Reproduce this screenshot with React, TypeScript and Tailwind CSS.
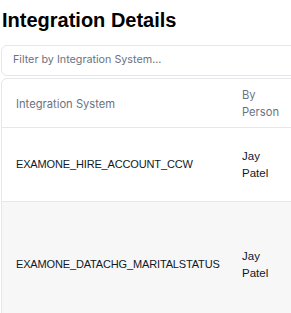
import React from 'react';

type Row = { system: string; person: string; h: string; striped: boolean };

const ROWS: Row[] = [
  { system: 'EXAMONE_HIRE_ACCOUNT_CCW', person: 'Jay Patel', h: 'h-[74px]', striped: false },
  { system: 'EXAMONE_DATACHG_MARITALSTATUS', person: 'Jay Patel', h: 'h-[126px]', striped: true },
];

const INTER = { fontFamily: 'Inter, sans-serif' };
const ARIAL = { fontFamily: '"Liberation Sans", Arial, sans-serif' };

export default function App() {
  return (
    <div className="w-[291px] h-[313px] overflow-hidden bg-white">
      <h1 className="pl-[2px] pt-[7px] text-[20px] leading-[26px] font-bold text-black" style={ARIAL}>
        Integration Details
      </h1>

      {/* Filtro */}
      <div className="mt-[12px] ml-px w-[320px] h-[31px] rounded-md border border-gray-200 flex items-center px-[11px]">
        <span className="text-[10.75px] text-gray-500" style={INTER}>
          Filter by Integration System...
        </span>
      </div>

      {/* Tabla */}
      <div className="mt-[2px] ml-px w-[400px] rounded-tl-md border border-gray-200">
        <div className="flex h-[49px] pt-[2px] border-b border-gray-200 items-center" style={INTER}>
          <div className="w-[227px] pl-[14px] text-[11.2px] text-gray-500">Integration System</div>
          <div className="w-[56px] pl-[13px] text-[11.2px] leading-[17px] text-gray-500">By Person</div>
        </div>
        {ROWS.map(r => (
          <div
            key={r.system}
            className={`flex items-center border-b border-gray-200 ${r.h} ${r.striped ? 'bg-[#f7f7f7]' : 'bg-white'}`}
            style={ARIAL}
          >
            <div className="w-[227px] pl-[14px] text-[11px] tracking-[-0.15px] text-gray-900">{r.system}</div>
            <div className="w-[56px] pl-[13px] text-[11.5px] leading-[17px] text-gray-900">{r.person}</div>
          </div>
        ))}
      </div>
    </div>
  );
}
